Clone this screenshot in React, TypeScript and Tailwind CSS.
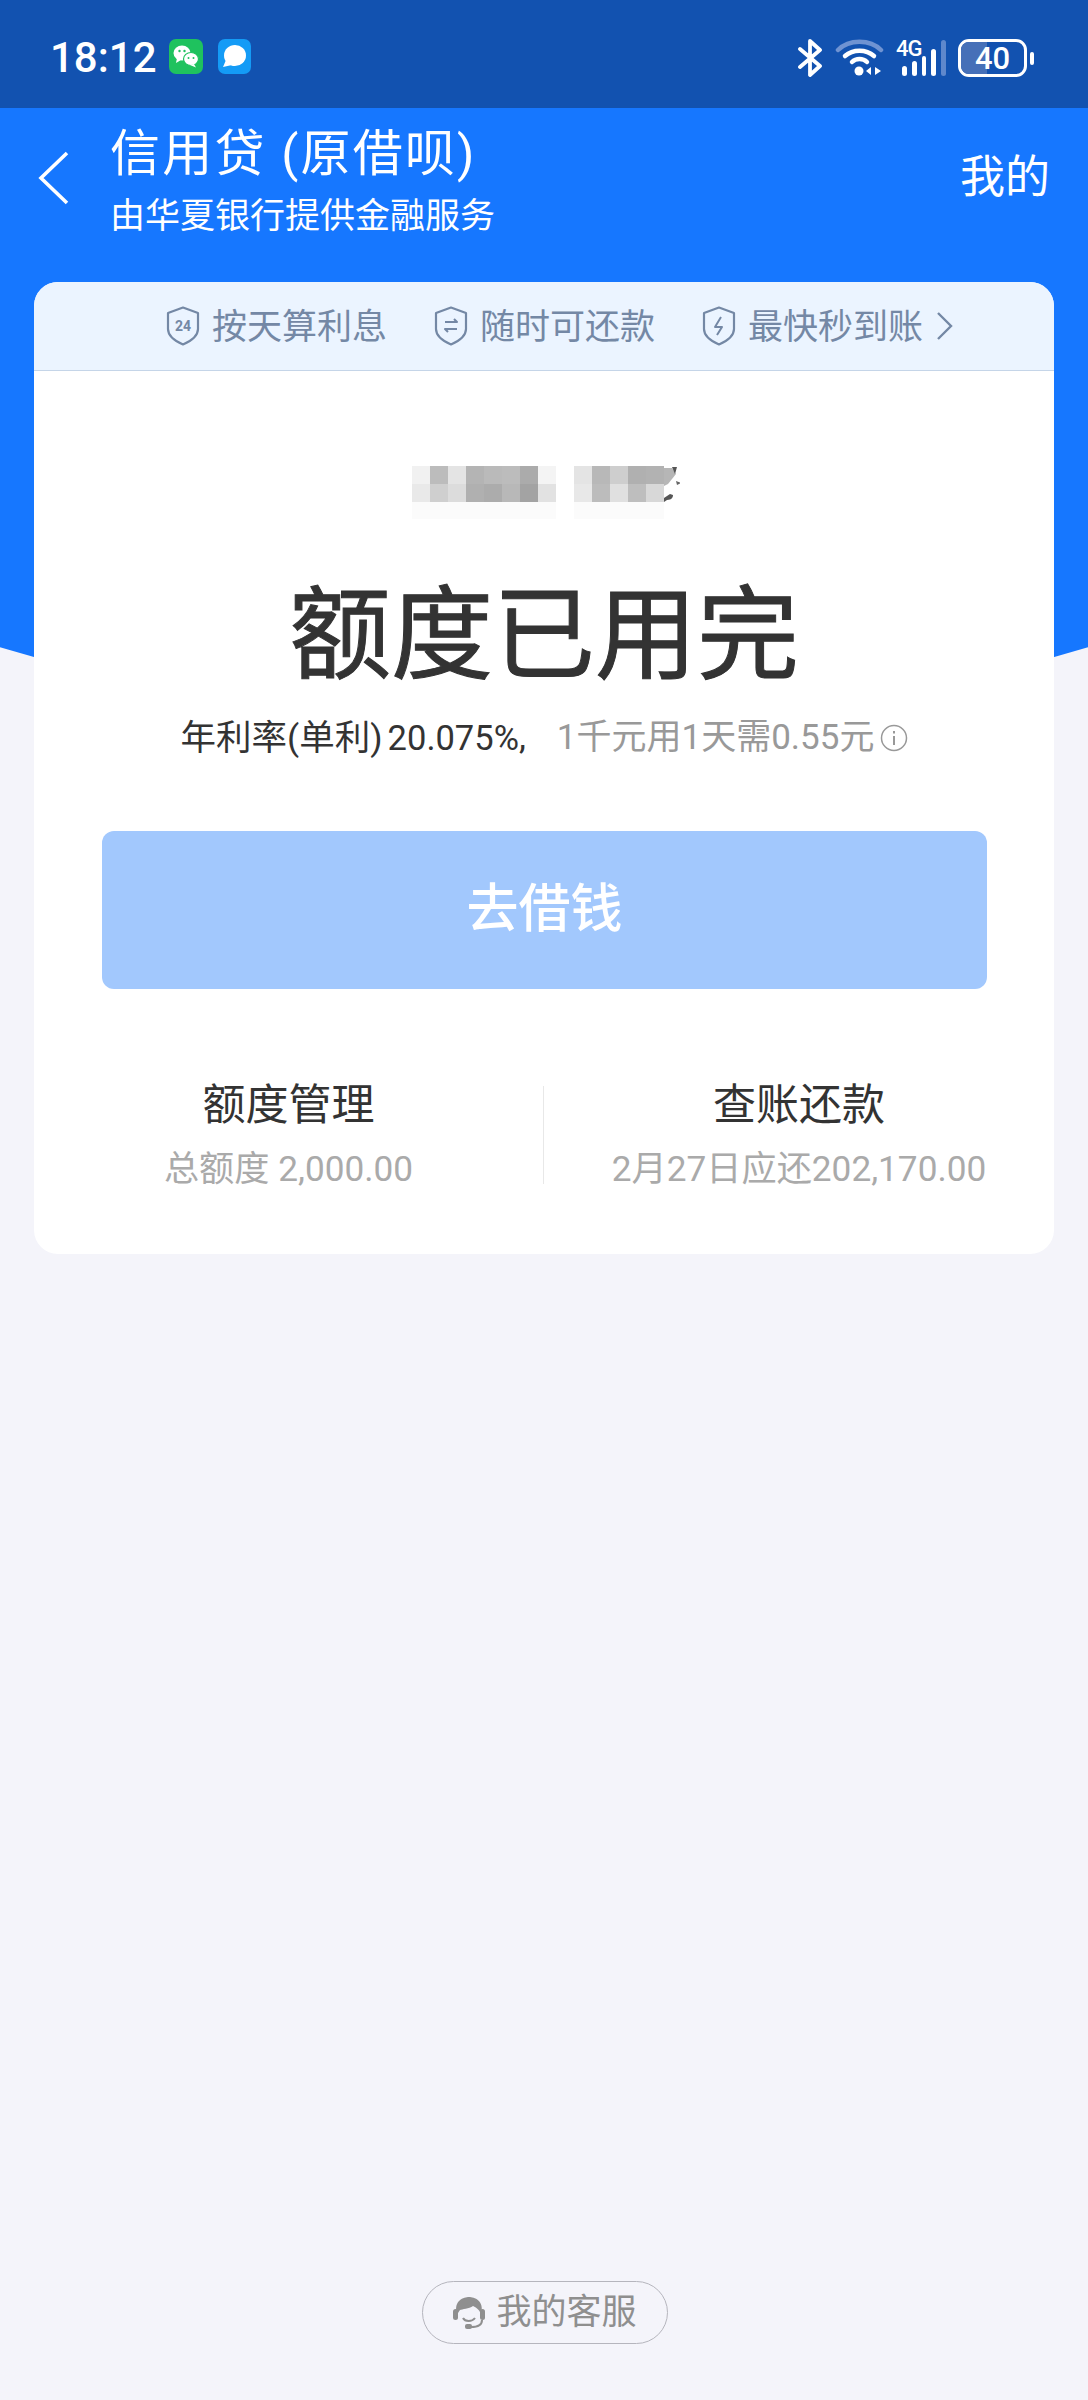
const FONT = "font-['Roboto','Noto_Sans_CJK_SC',sans-serif]";

const row1a = ['#f1f1f1', '#bcbcbc', '#e4e4e4', '#b4b4b4', '#bababa', '#bcbcbc', '#ababab', '#f4f4f4'];
const row2a = ['#e9e9e9', '#cfcfcf', '#dcdcdc', '#b0b0b0', '#acacac', '#b8b8b8', '#a3a3a3', '#e2e2e2'];
const row1b = ['#e4e4e4', '#b8b8b8', '#cecece', '#b0b0b0', '#b2b2b2'];
const row2b = ['#e8e8e8', '#bcbcbc', '#e0e0e0', '#bebebe', '#d8d8d8'];

function Mosaic({ top, bottom }: { top: string[]; bottom: string[] }) {
  return (
    <div className="flex flex-col">
      {[top, bottom].map((r, i) => (
        <div key={i} className="flex">
          {r.map((c, j) => (
            <div key={j} className="h-[18px] w-[18px]" style={{ backgroundColor: c }} />
          ))}
        </div>
      ))}
      <div className="h-[17px] bg-[#fbfbfb]" />
    </div>
  );
}

function Shield({ children }: { children: React.ReactNode }) {
  return (
    <svg width="34" height="40" viewBox="0 0 34 40" fill="none" stroke="#7488a5" strokeWidth="2.2" strokeLinejoin="round">
      <path d="M17 1.5 L32 7 V23 C32 30 25 35 17 38.5 C9 35 2 30 2 23 V7 Z" />
      {children}
    </svg>
  );
}

function Tip({ icon, text }: { icon: React.ReactNode; text: string }) {
  return (
    <div className="flex items-center gap-[12px]">
      {icon}
      <span className="pt-[2px] text-[35px] leading-none text-[#7488a5]">{text}</span>
    </div>
  );
}

function StatusIcons() {
  return (
    <div className="flex items-center">
      <svg width="26" height="38" viewBox="0 0 26 38" fill="none" stroke="white" strokeWidth="3.8" strokeLinejoin="round" strokeLinecap="round">
        <path d="M3 10 L23 27 L13 36 V2 L23 11 L3 28" />
      </svg>
      <svg className="ml-[12px]" width="49" height="38" viewBox="0 0 49 38" fill="none" strokeLinecap="round">
        <path d="M3 11 C14 0 35 0 46 11" stroke="#6f93d2" strokeWidth="4.5" />
        <path d="M10 17 C18 10 31 10 39 17" stroke="white" strokeWidth="4.5" />
        <path d="M17 23 C21 19 28 19 32 23" stroke="white" strokeWidth="4.5" />
        <circle cx="24" cy="32" r="4.5" fill="white" />
        <path d="M36 28 V36 L31 32 Z M40 28 V36 L46 32 Z" fill="white" />
      </svg>
      <div className="relative ml-[12px] flex h-[36px] w-[50px] items-end gap-[5px]">
        <span className="absolute left-0 top-[-2px] text-[22px] font-medium leading-none tracking-[-1px] text-white">4G</span>
        <div className="ml-[6px] h-[10px] w-[5px] rounded-full bg-white" />
        <div className="h-[15px] w-[5px] rounded-full bg-white" />
        <div className="h-[20px] w-[5px] rounded-full bg-white" />
        <div className="h-[27px] w-[5px] rounded-full bg-white" />
        <div className="h-[36px] w-[5px] rounded-full bg-[#5f88cc]" />
      </div>
      <div className="ml-[12px] flex items-center">
        <div className="relative flex h-[38px] w-[69px] items-center justify-center overflow-hidden rounded-[11px] border-[3px] border-white">
          <div className="absolute inset-y-0 left-0 w-[26px] bg-[#4670b8]" />
          <span className="relative text-[31px] font-medium leading-none text-white">40</span>
        </div>
        <div className="ml-[3px] h-[13px] w-[4px] rounded-full bg-white" />
      </div>
    </div>
  );
}

export default function App() {
  return (
    <div className={`${FONT} relative flex h-[2400px] w-[1088px] flex-col overflow-hidden bg-[#f4f4fa]`}>
      <div className="absolute left-0 top-[108px] h-[619px] w-full bg-[#1677ff] [clip-path:circle(1895px_at_544px_-1276px)]" />

      <div className="relative flex h-[108px] items-center justify-between bg-[#1252b0] pl-[50px] pr-[54px] pt-[8px]">
        <div className="flex items-center">
          <span className="text-[42px] font-medium leading-none text-white">18:12</span>
          <svg className="ml-[12px] mt-[-4px]" width="34" height="35" viewBox="0 0 34 35">
            <rect width="34" height="35" rx="7" fill="#1fc25e" />
            <ellipse cx="13" cy="14" rx="8.5" ry="7.5" fill="white" />
            <path d="M8 19 L7 24 L12 21 Z" fill="white" />
            <ellipse cx="22" cy="20" rx="7.5" ry="6.5" fill="white" stroke="#1fc25e" strokeWidth="1.2" />
            <path d="M25 25 L27 28.5 L21 26 Z" fill="white" />
            <circle cx="10.5" cy="12" r="1.2" fill="#1fc25e" />
            <circle cx="15.5" cy="12" r="1.2" fill="#1fc25e" />
            <circle cx="19.5" cy="19" r="1" fill="#1fc25e" />
            <circle cx="24.5" cy="19" r="1" fill="#1fc25e" />
          </svg>
          <svg className="ml-[15px] mt-[-4px]" width="33" height="35" viewBox="0 0 33 35">
            <rect width="33" height="35" rx="7" fill="#149bf6" />
            <ellipse cx="17" cy="16.5" rx="11" ry="10.5" fill="white" />
            <path d="M8 21 L5 28 L14 26 Z" fill="white" />
          </svg>
        </div>
        <StatusIcons />
      </div>

      <div className="relative flex h-[174px] items-start justify-between pl-[38px] pr-[38px] text-white">
        <div className="flex">
          <svg className="mt-[43px]" width="32" height="54" viewBox="0 0 32 54" fill="none" stroke="white" strokeWidth="3.6">
            <path d="M29 2 L3 27 L29 52" />
          </svg>
          <div className="ml-[40px] flex flex-col">
            <span className="mt-[17px] text-[50px] leading-[58px] tracking-[2.2px]">信用贷 (原借呗)</span>
            <span className="mt-[14px] text-[35px] leading-[40px]">由华夏银行提供金融服务</span>
          </div>
        </div>
        <span className="mt-[44px] text-[45px] leading-[52px]">我的</span>
      </div>

      <div className="relative mx-[34px] flex h-[972px] flex-col overflow-hidden rounded-[24px] bg-white">
        <div className="flex h-[89px] items-center border-b border-[#c5d5e8] bg-[#ebf4ff] pl-[132px]">
          <Tip
            text="按天算利息"
            icon={
              <Shield>
                <text x="17" y="25" textAnchor="middle" fontSize="14" fontWeight="700" fill="#7488a5" stroke="none">24</text>
              </Shield>
            }
          />
          <div className="ml-[47px]">
            <Tip
              text="随时可还款"
              icon={
                <Shield>
                  <path d="M11 16 H23 L20 13 M23 23 H11 L14 26" strokeWidth="2" />
                </Shield>
              }
            />
          </div>
          <div className="ml-[47px]">
            <Tip
              text="最快秒到账"
              icon={
                <Shield>
                  <path d="M19 11 L13 21 H20 L15 29" strokeWidth="2" />
                </Shield>
              }
            />
          </div>
          <svg className="ml-[13px]" width="18" height="30" viewBox="0 0 18 30" fill="none" stroke="#7488a5" strokeWidth="2.4">
            <path d="M2 2 L15 15 L2 28" />
          </svg>
        </div>

        <div className="flex h-[207px] items-start justify-center pl-[3px] pt-[95px]">
          <Mosaic top={row1a} bottom={row2a} />
          <div className="ml-[18px] flex">
            <Mosaic top={row1b} bottom={row2b} />
            <svg width="16" height="38" viewBox="0 0 16 38">
              <path d="M0 2 H8 L12 8 L4 18 L0 20 Z" fill="#b6b6b6" />
              <path d="M8 1 L13 1 L11 8 Z" fill="#555" />
              <path d="M12 15 L17 17 L13 19 Z" fill="#666" />
              <path d="M3 34 C8 34 9 31 9 29 L6 28 L0 32 V36 Z" fill="#555" />
            </svg>
          </div>
        </div>

        <div className="mt-[-3px] text-center text-[102px] leading-[122px] text-[#333333] [-webkit-text-stroke:1px_#333333]">额度已用完</div>

        <div className="mt-[18px] flex items-center justify-center pl-[1px] leading-[46px]">
          <span className="text-[35.5px] text-[#333333]">年利率(单利) </span>
          <span className="ml-[5px] text-[34.5px] text-[#333333]">20.075%</span>
          <span className="text-[35px] text-[#333333]">,</span>
          <span className="ml-[31px] text-[35px] text-[#999999]">1千元用1天需0.55元</span>
          <svg className="ml-[6px]" width="28" height="28" viewBox="0 0 28 28" fill="none" stroke="#999999" strokeWidth="1.5">
            <circle cx="14" cy="14" r="12.5" />
            <path d="M14 12 V21 M14 7 V9.5" strokeWidth="2" />
          </svg>
        </div>

        <div className="ml-[68px] mr-[67px] mt-[70px] flex h-[158px] items-center justify-center rounded-[12px] bg-[#a2c8fd] text-[52px] font-medium leading-none text-white">
          去借钱
        </div>

        <div className="mt-[91px] flex items-center">
          <div className="flex w-[509px] flex-col items-center">
            <span className="text-[43px] leading-[50px] text-[#333333]">额度管理</span>
            <span className="mt-[19px] text-[35.2px] leading-[40px] text-[#aaaaaa]">总额度 2,000.00</span>
          </div>
          <div className="h-[98px] w-px bg-[#e8e8e8]" />
          <div className="flex flex-1 flex-col items-center">
            <span className="text-[43px] leading-[50px] text-[#333333]">查账还款</span>
            <span className="mt-[19px] text-[35.2px] leading-[40px] text-[#aaaaaa]">2月27日应还202,170.00</span>
          </div>
        </div>
      </div>

      <div className="mb-[56px] mt-auto flex justify-center pl-[1px]">
        <div className="flex h-[63px] w-[246px] items-center justify-center gap-[10px] rounded-full border border-[#b5b5bd] text-[35px] leading-none text-[#8f8f8f]">
          <svg width="34" height="34" viewBox="0 0 34 34">
            <path d="M5 19 C1 4 12 1 17 1 C22 1 33 4 29 19 C28 14 25 12 21 10 C17 13 10 13 8 14 C7 15 6 17 5 19 Z" fill="#8f8f8f" />
            <rect x="1" y="13" width="5" height="11" rx="2.5" fill="#8f8f8f" />
            <rect x="28" y="13" width="5" height="11" rx="2.5" fill="#8f8f8f" />
            <path d="M11 22 C13 26 20 26 23 22" fill="none" stroke="#8f8f8f" strokeWidth="2" />
            <path d="M30 24 C30 29 25 31 19 31" fill="none" stroke="#8f8f8f" strokeWidth="2" />
            <rect x="13" y="28" width="7" height="5" rx="2" fill="#8f8f8f" />
          </svg>
          <span>我的客服</span>
        </div>
      </div>
    </div>
  );
}
